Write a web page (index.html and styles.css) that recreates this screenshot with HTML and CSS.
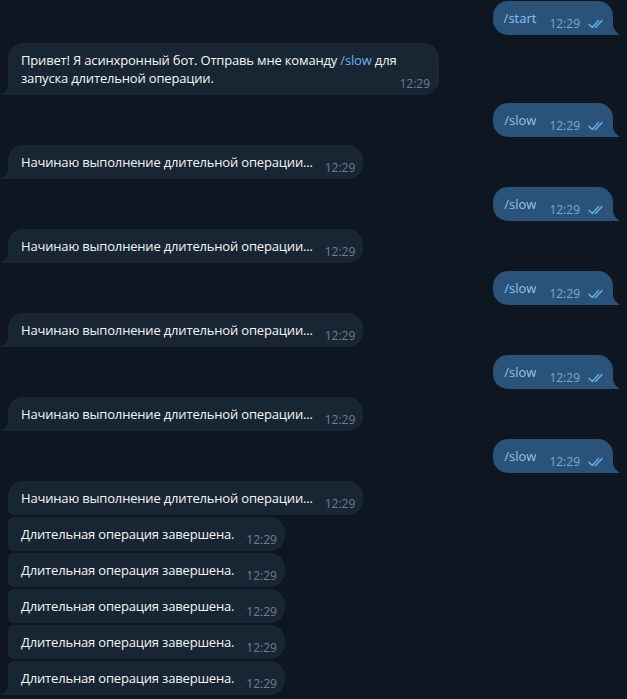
FILE: index.html
```html
<!DOCTYPE html>
<html lang="ru">
<head>
<meta charset="utf-8">
<link rel="stylesheet" href="styles.css">
</head>
<body>
<div class="chat">
  <div class="row out">
    <div class="bubble out tail">
      <span class="text cmd">/start</span>
      <span class="meta"><span class="time">12:29</span><svg class="check" width="18" height="10" viewBox="0 0 18 10"><path d="M1 5.2 L4.3 8.5 L10.5 1.5 M7.6 8.5 L14 1.5" fill="none" stroke="#5fb0ee" stroke-width="1.5" stroke-linecap="round" stroke-linejoin="round"/></svg></span>
      <svg class="tail-svg" width="8" height="17" viewBox="0 0 8 17"><path d="M0 0 C0 9 3 14 8 17 H0 Z" fill="#2b5278"/></svg>
    </div>
  </div>

  <div class="row in">
    <div class="bubble in tail multi">
      <span class="text">Привет! Я асинхронный бот. Отправь мне команду <span class="link">/slow</span> для<br>запуска длительной операции.</span>
      <span class="meta"><span class="time">12:29</span></span>
      <svg class="tail-svg" width="8" height="17" viewBox="0 0 8 17"><path d="M8 0 C8 9 5 14 0 17 H8 Z" fill="#182533"/></svg>
    </div>
  </div>

  <div class="row out">
    <div class="bubble out tail">
      <span class="text cmd">/slow</span>
      <span class="meta"><span class="time">12:29</span><svg class="check" width="18" height="10" viewBox="0 0 18 10"><path d="M1 5.2 L4.3 8.5 L10.5 1.5 M7.6 8.5 L14 1.5" fill="none" stroke="#5fb0ee" stroke-width="1.5" stroke-linecap="round" stroke-linejoin="round"/></svg></span>
      <svg class="tail-svg" width="8" height="17" viewBox="0 0 8 17"><path d="M0 0 C0 9 3 14 8 17 H0 Z" fill="#2b5278"/></svg>
    </div>
  </div>
  <div class="row in">
    <div class="bubble in tail">
      <span class="text">Начинаю выполнение длительной операции...</span>
      <span class="meta"><span class="time">12:29</span></span>
      <svg class="tail-svg" width="8" height="17" viewBox="0 0 8 17"><path d="M8 0 C8 9 5 14 0 17 H8 Z" fill="#182533"/></svg>
    </div>
  </div>

  <div class="row out">
    <div class="bubble out tail">
      <span class="text cmd">/slow</span>
      <span class="meta"><span class="time">12:29</span><svg class="check" width="18" height="10" viewBox="0 0 18 10"><path d="M1 5.2 L4.3 8.5 L10.5 1.5 M7.6 8.5 L14 1.5" fill="none" stroke="#5fb0ee" stroke-width="1.5" stroke-linecap="round" stroke-linejoin="round"/></svg></span>
      <svg class="tail-svg" width="8" height="17" viewBox="0 0 8 17"><path d="M0 0 C0 9 3 14 8 17 H0 Z" fill="#2b5278"/></svg>
    </div>
  </div>
  <div class="row in">
    <div class="bubble in tail">
      <span class="text">Начинаю выполнение длительной операции...</span>
      <span class="meta"><span class="time">12:29</span></span>
      <svg class="tail-svg" width="8" height="17" viewBox="0 0 8 17"><path d="M8 0 C8 9 5 14 0 17 H8 Z" fill="#182533"/></svg>
    </div>
  </div>

  <div class="row out">
    <div class="bubble out tail">
      <span class="text cmd">/slow</span>
      <span class="meta"><span class="time">12:29</span><svg class="check" width="18" height="10" viewBox="0 0 18 10"><path d="M1 5.2 L4.3 8.5 L10.5 1.5 M7.6 8.5 L14 1.5" fill="none" stroke="#5fb0ee" stroke-width="1.5" stroke-linecap="round" stroke-linejoin="round"/></svg></span>
      <svg class="tail-svg" width="8" height="17" viewBox="0 0 8 17"><path d="M0 0 C0 9 3 14 8 17 H0 Z" fill="#2b5278"/></svg>
    </div>
  </div>
  <div class="row in">
    <div class="bubble in tail">
      <span class="text">Начинаю выполнение длительной операции...</span>
      <span class="meta"><span class="time">12:29</span></span>
      <svg class="tail-svg" width="8" height="17" viewBox="0 0 8 17"><path d="M8 0 C8 9 5 14 0 17 H8 Z" fill="#182533"/></svg>
    </div>
  </div>

  <div class="row out">
    <div class="bubble out tail">
      <span class="text cmd">/slow</span>
      <span class="meta"><span class="time">12:29</span><svg class="check" width="18" height="10" viewBox="0 0 18 10"><path d="M1 5.2 L4.3 8.5 L10.5 1.5 M7.6 8.5 L14 1.5" fill="none" stroke="#5fb0ee" stroke-width="1.5" stroke-linecap="round" stroke-linejoin="round"/></svg></span>
      <svg class="tail-svg" width="8" height="17" viewBox="0 0 8 17"><path d="M0 0 C0 9 3 14 8 17 H0 Z" fill="#2b5278"/></svg>
    </div>
  </div>
  <div class="row in">
    <div class="bubble in tail">
      <span class="text">Начинаю выполнение длительной операции...</span>
      <span class="meta"><span class="time">12:29</span></span>
      <svg class="tail-svg" width="8" height="17" viewBox="0 0 8 17"><path d="M8 0 C8 9 5 14 0 17 H8 Z" fill="#182533"/></svg>
    </div>
  </div>

  <div class="row out">
    <div class="bubble out tail">
      <span class="text cmd">/slow</span>
      <span class="meta"><span class="time">12:29</span><svg class="check" width="18" height="10" viewBox="0 0 18 10"><path d="M1 5.2 L4.3 8.5 L10.5 1.5 M7.6 8.5 L14 1.5" fill="none" stroke="#5fb0ee" stroke-width="1.5" stroke-linecap="round" stroke-linejoin="round"/></svg></span>
      <svg class="tail-svg" width="8" height="17" viewBox="0 0 8 17"><path d="M0 0 C0 9 3 14 8 17 H0 Z" fill="#2b5278"/></svg>
    </div>
  </div>

  <div class="group in">
    <div class="bubble in first">
      <span class="text">Начинаю выполнение длительной операции...</span>
      <span class="meta"><span class="time">12:29</span></span>
    </div>
    <div class="bubble in mid">
      <span class="text">Длительная операция завершена.</span>
      <span class="meta"><span class="time">12:29</span></span>
    </div>
    <div class="bubble in mid">
      <span class="text">Длительная операция завершена.</span>
      <span class="meta"><span class="time">12:29</span></span>
    </div>
    <div class="bubble in mid">
      <span class="text">Длительная операция завершена.</span>
      <span class="meta"><span class="time">12:29</span></span>
    </div>
    <div class="bubble in mid">
      <span class="text">Длительная операция завершена.</span>
      <span class="meta"><span class="time">12:29</span></span>
    </div>
    <div class="bubble in last tail">
      <span class="text">Длительная операция завершена.</span>
      <span class="meta"><span class="time">12:29</span></span>
      <svg class="tail-svg" width="8" height="17" viewBox="0 0 8 17"><path d="M8 0 C8 9 5 14 0 17 H8 Z" fill="#182533"/></svg>
    </div>
  </div>
</div>
</body>
</html>
```

FILE: styles.css
```css
* { box-sizing: border-box; }
html, body {
  margin: 0;
  padding: 0;
  background: #0e1621;
  height: 100%;
  overflow: hidden;
}
body {
  font-family: "Open Sans", "Noto Sans", sans-serif;
  font-size: 13px;
  color: #f5f5f5;
}
.chat {
  display: flex;
  flex-direction: column;
  gap: 8px;
  padding: 1px 14px 0 8px;
}
.row {
  display: flex;
}
.row.out { justify-content: flex-end; }
.row.in { justify-content: flex-start; }
.group {
  display: flex;
  flex-direction: column;
  align-items: flex-start;
  gap: 2px;
}
.bubble {
  position: relative;
  display: flex;
  align-items: flex-end;
  gap: 12px;
  padding: 8px 8px 8px 13px;
  border-radius: 15px;
  line-height: 18px;
  min-height: 34px;
}
.bubble.in { background: #182533; }
.bubble.in .text { letter-spacing: -0.17px; }
.bubble.multi { gap: 3px; padding-right: 9px; }
.bubble.out {
  background: #2b5278;
  padding-left: 11px;
  padding-right: 7px;
  gap: 13px;
}
.bubble.in.tail { border-bottom-left-radius: 0; }
.bubble.out.tail { border-bottom-right-radius: 0; }
.bubble.first { border-bottom-left-radius: 6px; }
.bubble.mid { border-top-left-radius: 6px; border-bottom-left-radius: 6px; }
.bubble.last { border-top-left-radius: 6px; }
.text { white-space: nowrap; }
.cmd { color: #8ec3ef; }
.link { color: #6ab3f3; }
.meta {
  display: flex;
  align-items: center;
  gap: 8px;
  font-size: 12px;
  line-height: 14px;
  margin-bottom: -5px;
  padding-bottom: 1px;
}
.bubble.in .time { color: #6d7f8f; }
.bubble.out .time { color: #7da8d3; }
.check { display: block; }
.tail-svg {
  position: absolute;
  bottom: 0;
}
.bubble.out .tail-svg { right: -7px; }
.bubble.in .tail-svg { left: -7px; }
```
